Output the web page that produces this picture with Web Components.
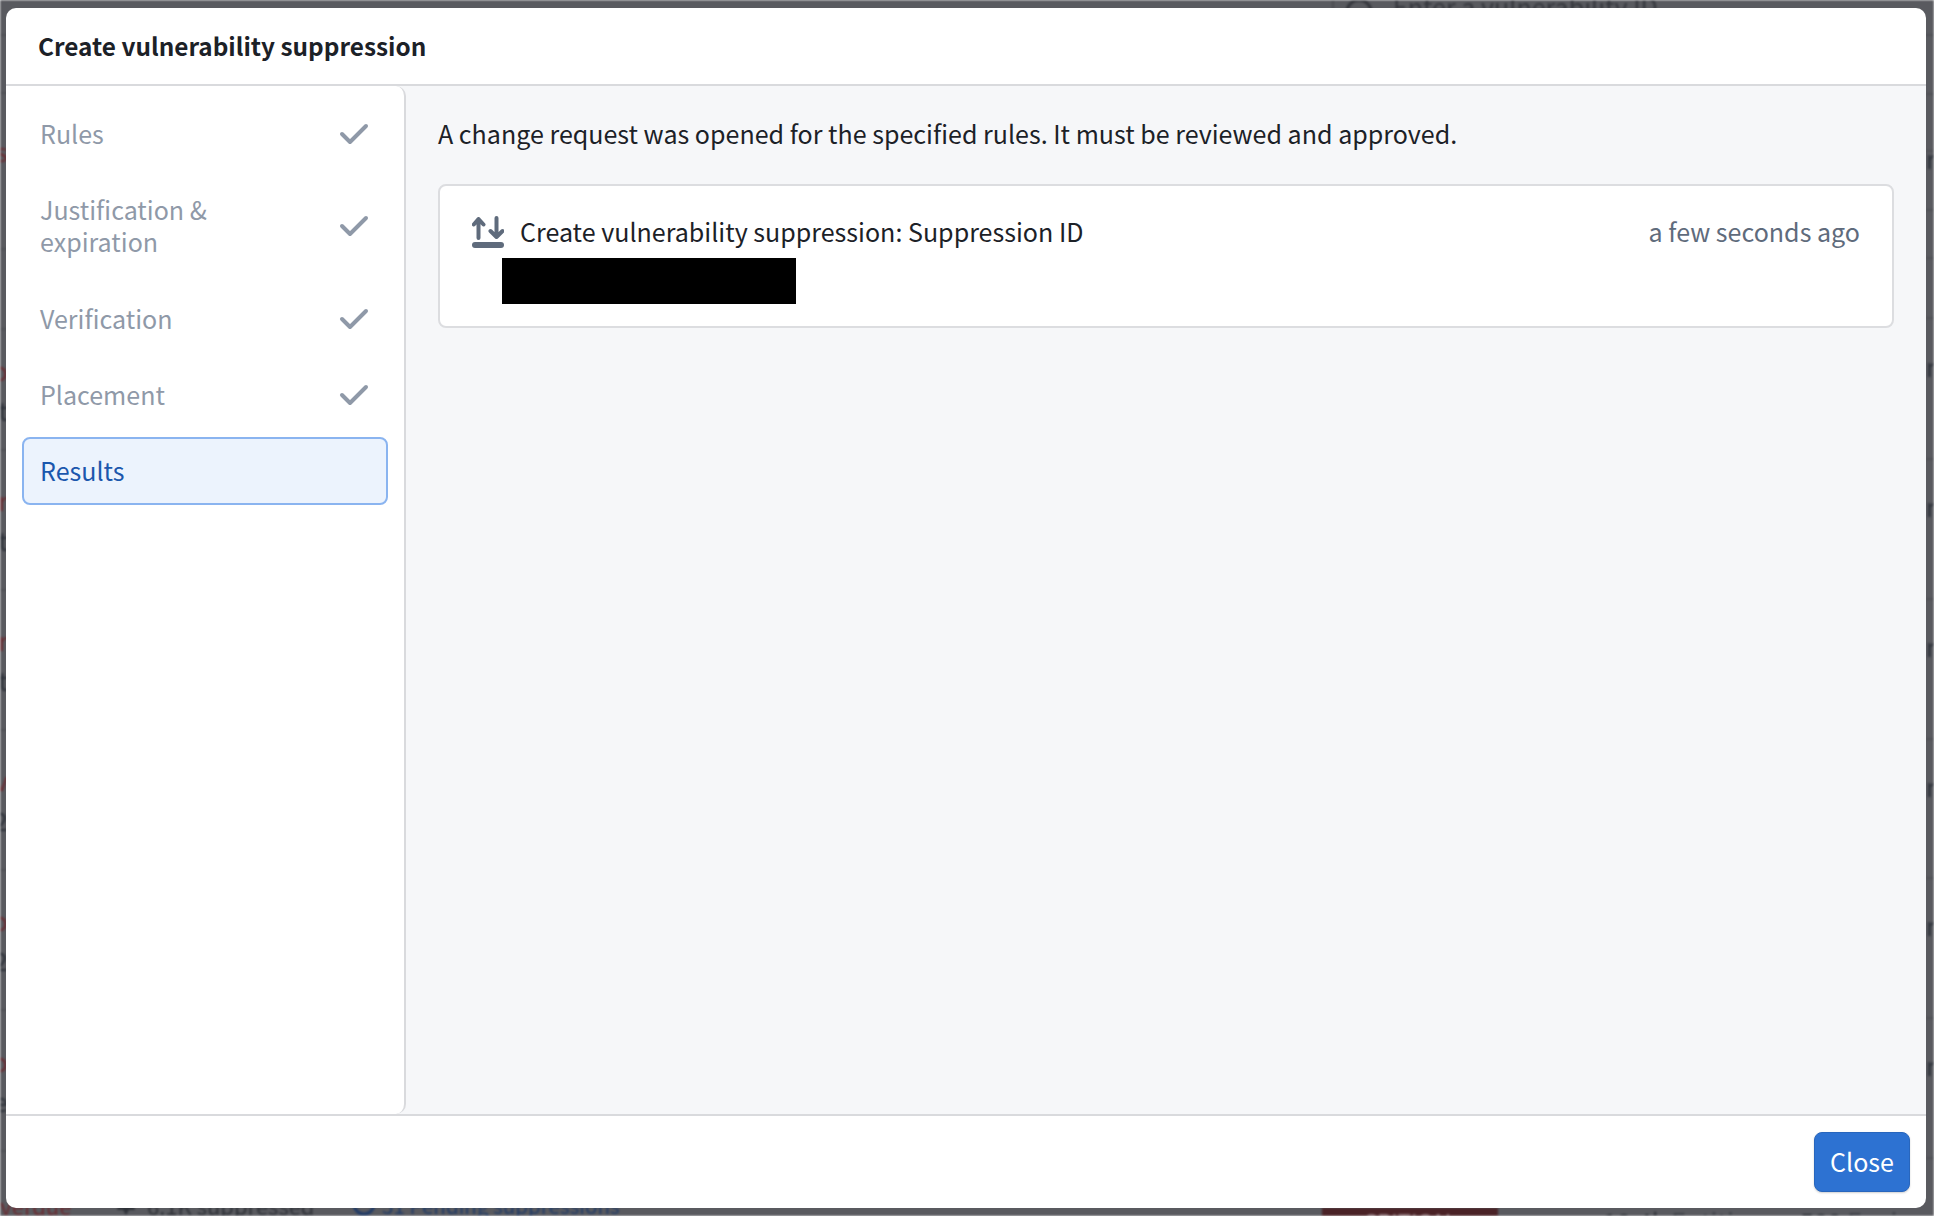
<!DOCTYPE html>
<html lang="en">
<head>
<meta charset="utf-8">
<title>Create vulnerability suppression</title>
<style>
html, body { margin: 0; height: 100%; }
body {
	position: relative;
	width: 1934px;
	height: 1216px;
	overflow: hidden;
	font-family: "Noto Sans CJK SC", "Noto Sans", sans-serif;
	font-size: 25.050px;
	line-height: 32px;
	color: #1c2127;
}
</style>
</head>
<body>
<scan-backdrop></scan-backdrop>
<wizard-dialog>
	<span slot="title">Create vulnerability suppression</span>
	<wizard-step slot="steps" done>Rules</wizard-step>
	<wizard-step slot="steps" done tall>Justification &amp; expiration</wizard-step>
	<wizard-step slot="steps" done>Verification</wizard-step>
	<wizard-step slot="steps" done>Placement</wizard-step>
	<wizard-step slot="steps" active>Results</wizard-step>
	<p class="lead" style="margin:0">A change request was opened for the specified rules. It must be reviewed and approved.</p>
	<change-card when="a few seconds ago">Create vulnerability suppression: Suppression ID</change-card>
	<blue-button slot="footer">Close</blue-button>
</wizard-dialog>

<script>
(function() {
	// dimmed page behind the dialog, only its edges are visible
	const leftRows = [
		[58, "", ""], [156, "s", ""], [80, "", ""], [121, "o", "t"], [140, "r", "t"],
		[140, "r", "t"], [140, "v", "2"], [140, "o", "2"], [141, "o", "e"]
	];
	const rightRows = [
		[59, "", ""], [57, "", ""], [59, "r", ""], [39, "", ""], [60, "", ""],
		[141, "n", ""], [140, "n", ""], [140, "n", ""], [139, "n", ""], [140, "n", ""], [140, "n", ""]
	];

	function stripCells(rows, side) {
		return rows.map(([h, a, b]) => `
			<div class="cell ${side}" style="height:${h}px">
				<span class="${side === "left" ? "red" : "dark"}">${a}</span>
				<span class="dark">${b}</span>
			</div>`).join("");
	}

	const backdropTemplate = document.createElement("template");
	backdropTemplate.innerHTML = `
		<style>
		:host {
			display: flex;
			flex-direction: column;
			width: 1934px;
			height: 1216px;
			overflow: hidden;
			background: #595a5f;
			color: #2f3238;
			filter: blur(0.8px);
		}
		.top { height: 36px; flex: none; display: flex; align-items: flex-start; padding-left: 1332px; border-bottom: 2px solid #4f5055; box-sizing: border-box; overflow: hidden; color: #34363c; }
		.top .rule { width: 2px; height: 36px; background: #4b4c51; margin-right: 11px; }
		.top svg { margin: -2px 20px 0 0; flex: none; }
		.top span { margin-top: -10px; }
		.middle { flex: 1; display: flex; justify-content: space-between; min-height: 0; overflow: hidden; }
		.strip { width: 8px; overflow: hidden; }
		.cell { box-sizing: border-box; border-bottom: 2px solid #4f5055; display: flex; flex-direction: column; justify-content: center; overflow: hidden; }
		.cell.left { align-items: flex-end; }
		.cell.left span { min-height: 40px; line-height: 40px; }
		.cell.right { padding-bottom: 46px; }
		.cell.right span { line-height: 20px; }
		.red { color: #6b2a30; }
		.dark { color: #2b3038; }
		.bottom { height: 24px; flex: none; display: flex; align-items: flex-start; overflow: hidden; white-space: nowrap; }
		.bottom span, .bottom svg { flex: none; }
		.over, .sup { font-size: 22px; }
		.pend { font-size: 20.600px; }
		.over { color: #6b2a30; margin: -3px 0 0 -16px; width: 132px; }
		.sup { margin: -3px 0 0 11px; width: 205px; }
		.pend { color: #1f3a66; margin: -3px 0 0 6px; width: 940px; }
		.tag { width: 176px; height: 24px; margin-top: 16px; line-height: 24px; background: #4a2226; color: #8d7478; text-align: center; font-size: 22px; }
		.stat { width: 197px; margin: 13px 0 0 105px; }
		.stat + .stat { margin-left: 0; }
		.stat b { font-weight: 400; color: #2f3238; }
		.stat i { font-style: normal; color: #3f4248; }
		</style>
		<div class="top">
			<div class="rule"></div>
			<svg width="28" height="28" viewBox="0 0 28 28" fill="none" stroke="#34363c" stroke-width="3"><circle cx="14" cy="14" r="12"/></svg>
			<span>Enter a vulnerability ID</span>
		</div>
		<div class="middle">
			<div class="strip">${stripCells(leftRows, "left")}</div>
			<div class="strip">${stripCells(rightRows, "right")}</div>
		</div>
		<div class="bottom">
			<span class="over">Overdue</span>
			<svg width="20" height="24" viewBox="0 0 20 24"><path d="M10 2c5 0 7 4 7 8l2 8h-6l-3 5-3-5H1l2-8c0-4 2-8 7-8z" fill="#2f3238"/></svg>
			<span class="sup">6.1K suppressed</span>
			<svg width="24" height="24" viewBox="0 0 24 24" fill="none" stroke="#1f3a66" stroke-width="3"><circle cx="12" cy="12" r="10"/></svg>
			<span class="pend">51 Pending suppressions</span>
			<span class="tag">CRITICAL</span>
			<span class="stat"><b>10.4k</b> <i>Entities</i></span>
			<span class="stat"><b>500</b> <i>Environments</i></span>
		</div>
	`;

	class ScanBackdrop extends HTMLElement {
		constructor() {
			super();
			this.attachShadow({mode: "open"}).appendChild(backdropTemplate.content.cloneNode(true));
		}
	}
	customElements.define("scan-backdrop", ScanBackdrop);

	const dialogTemplate = document.createElement("template");
	dialogTemplate.innerHTML = `
		<style>
		:host {
			display: flex;
			flex-direction: column;
			position: absolute;
			left: 6px;
			top: 8px;
			width: 1920px;
			height: 1200px;
			background: #fff;
			border-radius: 10px;
			overflow: hidden;
		}
		header {
			flex: none;
			height: 78px;
			box-sizing: border-box;
			padding: 0 32px;
			display: flex;
			align-items: center;
			font-size: 24.350px;
			font-weight: 600;
			border-bottom: 2px solid #d9dadd;
			color: #1c2127;
		}
		.body { flex: 1; display: flex; min-height: 0; background: #f6f7f9; }
		nav {
			flex: none;
			width: 400px;
			box-sizing: border-box;
			padding: 15px 16px 0 16px;
			background: #fff;
			border-right: 2px solid #d9dadd;
			border-radius: 0 10px 10px 0;
			display: flex;
			flex-direction: column;
			gap: 10px;
		}
		main { flex: 1; min-width: 0; padding: 31px 32px 0 32px; }
		footer {
			flex: none;
			height: 94px;
			box-sizing: border-box;
			border-top: 2px solid #d9dadd;
			padding: 16px;
			display: flex;
			justify-content: flex-end;
		}
		</style>
		<header><slot name="title"></slot></header>
		<div class="body">
			<nav><slot name="steps"></slot></nav>
			<main><slot></slot></main>
		</div>
		<footer><slot name="footer"></slot></footer>
	`;

	class WizardDialog extends HTMLElement {
		constructor() {
			super();
			this.attachShadow({mode: "open"}).appendChild(dialogTemplate.content.cloneNode(true));
		}
	}
	customElements.define("wizard-dialog", WizardDialog);

	const stepTemplate = document.createElement("template");
	stepTemplate.innerHTML = `
		<style>
		:host {
			display: flex;
			align-items: center;
			justify-content: space-between;
			box-sizing: border-box;
			padding: 14px 16px;
			border: 2px solid transparent;
			border-radius: 8px;
			color: #8f99a8;
		}
		:host([tall]) { margin-bottom: 1px; }
		:host([active]) {
			background: #ecf3fd;
			border-color: #8ab4f0;
			color: #1b57ad;
			margin-top: -1px;
			padding-top: 15px;
			padding-bottom: 15px;
		}
		.label { width: 190px; margin-bottom: 2px; }
		svg { flex: none; display: none; }
		:host([done]) svg { display: block; }
		</style>
		<span class="label"><slot></slot></span>
		<svg width="32" height="24" viewBox="0 0 32 24" fill="none" stroke="#8f99a8" stroke-width="4" stroke-linecap="round" stroke-linejoin="round">
			<polyline points="4,12 12,20 28,4"/>
		</svg>
	`;

	class WizardStep extends HTMLElement {
		constructor() {
			super();
			this.attachShadow({mode: "open"}).appendChild(stepTemplate.content.cloneNode(true));
		}
	}
	customElements.define("wizard-step", WizardStep);

	const cardTemplate = document.createElement("template");
	cardTemplate.innerHTML = `
		<style>
		:host {
			display: block;
			box-sizing: border-box;
			height: 144px;
			margin-top: 35px;
			padding: 30px 32px 0 32px;
			background: #fff;
			border: 2px solid #dcdde0;
			border-radius: 8px;
		}
		.row { display: flex; align-items: center; height: 32px; }
		svg { flex: none; margin-right: 16px; }
		.title { flex: 1; margin-top: -2px; }
		.when { color: #5f6b7c; margin-top: -2px; }
		.redacted { width: 294px; height: 46px; margin: 10px 0 0 30px; background: #000; }
		</style>
		<div class="row">
			<svg width="32" height="32" viewBox="0 0 32 32" fill="none" stroke="#5f6b7c" stroke-width="4" stroke-linecap="round" stroke-linejoin="round">
				<path d="M6.500 3v19M1.800 8.500 6.500 3l5 5.500"/>
				<path d="M24.500 2v19M18.500 15 24.500 21l6-6"/>
				<rect x="0" y="26" width="32" height="6" rx="3" fill="#5f6b7c" stroke="none"/>
			</svg>
			<span class="title"><slot></slot></span>
			<span class="when"></span>
		</div>
		<div class="redacted"></div>
	`;

	class ChangeCard extends HTMLElement {
		constructor() {
			super();
			this.attachShadow({mode: "open"}).appendChild(cardTemplate.content.cloneNode(true));
			this.shadowRoot.querySelector(".when").textContent = this.getAttribute("when");
		}
	}
	customElements.define("change-card", ChangeCard);

	const buttonTemplate = document.createElement("template");
	buttonTemplate.innerHTML = `
		<style>
		:host { display: block; }
		button {
			display: block;
			box-sizing: border-box;
			width: 96px;
			height: 60px;
			padding: 0 0 2px;
			font: inherit;
			color: #fff;
			background: #2d72d2;
			border: 1px solid #2866bd;
			border-radius: 8px;
			box-shadow: 0 1px 2px rgba(17, 20, 24, 0.2);
		}
		</style>
		<button type="button"><slot></slot></button>
	`;

	class BlueButton extends HTMLElement {
		constructor() {
			super();
			this.attachShadow({mode: "open"}).appendChild(buttonTemplate.content.cloneNode(true));
		}
	}
	customElements.define("blue-button", BlueButton);
})();
</script>
</body>
</html>
